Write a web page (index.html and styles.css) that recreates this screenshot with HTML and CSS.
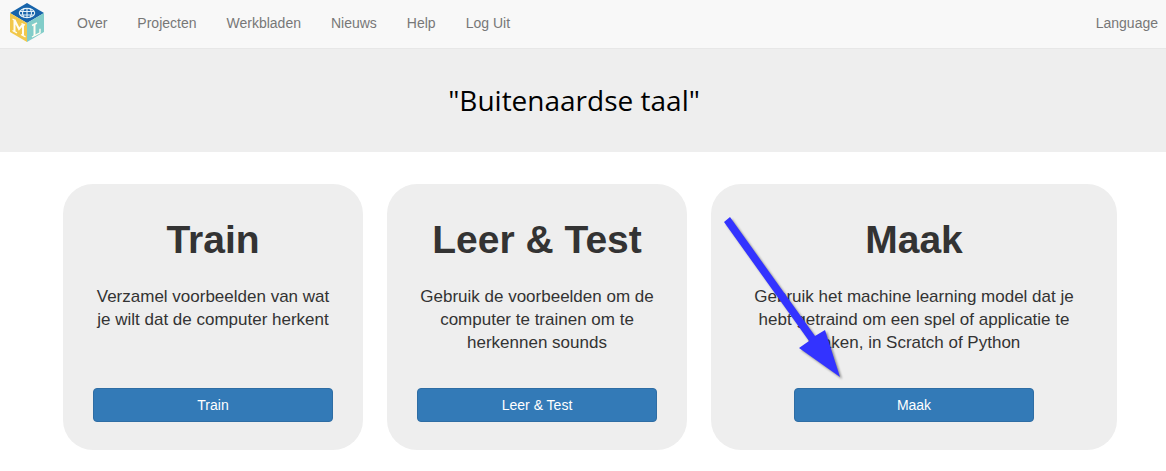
FILE: index.html
```html
<!DOCTYPE html>
<html lang="nl">
<head>
<meta charset="utf-8">
<title>Buitenaardse taal</title>
<link rel="stylesheet" href="styles.css">
</head>
<body>
<nav class="navbar">
  <a class="brand" href="#" aria-label="Home">
    <svg class="logo" width="34" height="40" viewBox="0 0 34 40">
      <path fill="#1764ab" d="M17 0 34 10 17 20 0 10Z"/>
      <path fill="#f2c84b" d="M0 10 17 20V39L0 29Z"/>
      <path fill="#82cdc9" d="M34 10 17 20V39L34 29Z"/>
      <g fill="none" stroke="#e4f1f7" stroke-width="1.1">
        <ellipse cx="17" cy="10" rx="7.7" ry="4.6"/>
        <path d="M10 8.500h14M10 12h14M14 5.700q-3 4.300 0 8.600M20 5.700q3 4.300 0 8.600M17 5.500v9"/>
      </g>
      <g fill="none" stroke="#fffdf2" stroke-width="2">
        <path d="M4.500 17v11.500M4.500 17l4.500 9 4-4.500M13 21.500v11"/>
        <path stroke-width="1.300" d="M2.500 16l3 1.500M2.500 27.500l4.500 2.300M11.500 20.500l3.500 1.700M11 31.500l4.500 2.300"/>
        <path d="M24.500 21v12"/>
        <path stroke-width="1.400" d="M22 22.500l5-2.500M22 34l8-4.200v-4"/>
      </g>
    </svg>
  </a>
  <a class="nav-link" href="#">Over</a>
  <a class="nav-link" href="#">Projecten</a>
  <a class="nav-link" href="#">Werkbladen</a>
  <a class="nav-link" href="#">Nieuws</a>
  <a class="nav-link" href="#">Help</a>
  <a class="nav-link" href="#">Log Uit</a>
  <a class="nav-link language" href="#">Language</a>
</nav>
<header class="hero">
  <h1 class="project-title">"Buitenaardse taal"</h1>
</header>
<main class="phases">
  <section class="card">
    <h2 class="card-title">Train</h2>
    <p class="card-text">Verzamel voorbeelden van wat je wilt dat de computer herkent</p>
    <button class="btn" type="button">Train</button>
  </section>
  <section class="card">
    <h2 class="card-title">Leer &amp; Test</h2>
    <p class="card-text">Gebruik de voorbeelden om de computer te trainen om te herkennen sounds</p>
    <button class="btn" type="button">Leer &amp; Test</button>
  </section>
  <section class="card">
    <h2 class="card-title">Maak</h2>
    <p class="card-text">Gebruik het machine learning model dat je hebt getraind om een spel of applicatie te maken, in Scratch of Python</p>
    <button class="btn" type="button">Maak</button>
    <svg class="arrow" width="130" height="195" viewBox="0 0 130 195" aria-hidden="true">
      <path fill="#3333ff" d="M13 38 19 33 104 152 114 146 129 193 88 164 98 157Z"/>
    </svg>
  </section>
</main>
</body>
</html>
```
FILE: styles.css
```css
* { box-sizing: border-box; }
body {
  margin: 0;
  background: #fff;
  color: #333;
  font-family: "Liberation Sans", Arial, sans-serif;
  font-size: 14px;
}
.navbar {
  display: flex;
  align-items: center;
  height: 49px;
  padding: 0 8px 2px 10px;
  background: #f8f8f8;
  border-bottom: 1px solid #e7e7e7;
}
.brand { display: flex; margin-right: 18px; }
.nav-link {
  padding: 0 15px;
  color: #777;
  line-height: 20px;
  text-decoration: none;
}
.language { margin-left: auto; padding-right: 0; }
.hero {
  padding: 32px 18px 32px 0;
  background: #eee;
}
.project-title {
  margin: 0;
  color: #000;
  font: 400 28px/39px "Open Sans", "Noto Sans", sans-serif;
  text-align: center;
}
.phases {
  display: grid;
  grid-template-columns: 300fr 300fr 406fr;
  gap: 24px;
  padding: 32px 49px 20px 63px;
}
.card {
  position: relative;
  display: flex;
  flex-direction: column;
  align-items: center;
  min-height: 266px;
  padding: 33px 30px 28px;
  border-radius: 30px;
  background: #eee;
  text-align: center;
}
.card-title {
  margin: 0 0 22px;
  font-size: 39px;
  line-height: 46px;
}
.card-text {
  margin: 0;
  font-size: 17px;
  line-height: 23px;
}
.btn {
  width: 100%;
  max-width: 240px;
  height: 34px;
  margin-top: auto;
  border: 1px solid #2e6da4;
  border-radius: 4px;
  background: #337ab7;
  color: #fff;
  font: 14px/20px "Liberation Sans", Arial, sans-serif;
}
.arrow {
  position: absolute;
  top: 0;
  left: 0;
  overflow: visible;
  filter: drop-shadow(2px 2px 1px rgba(0, 0, 0, 0.4));
}
```
